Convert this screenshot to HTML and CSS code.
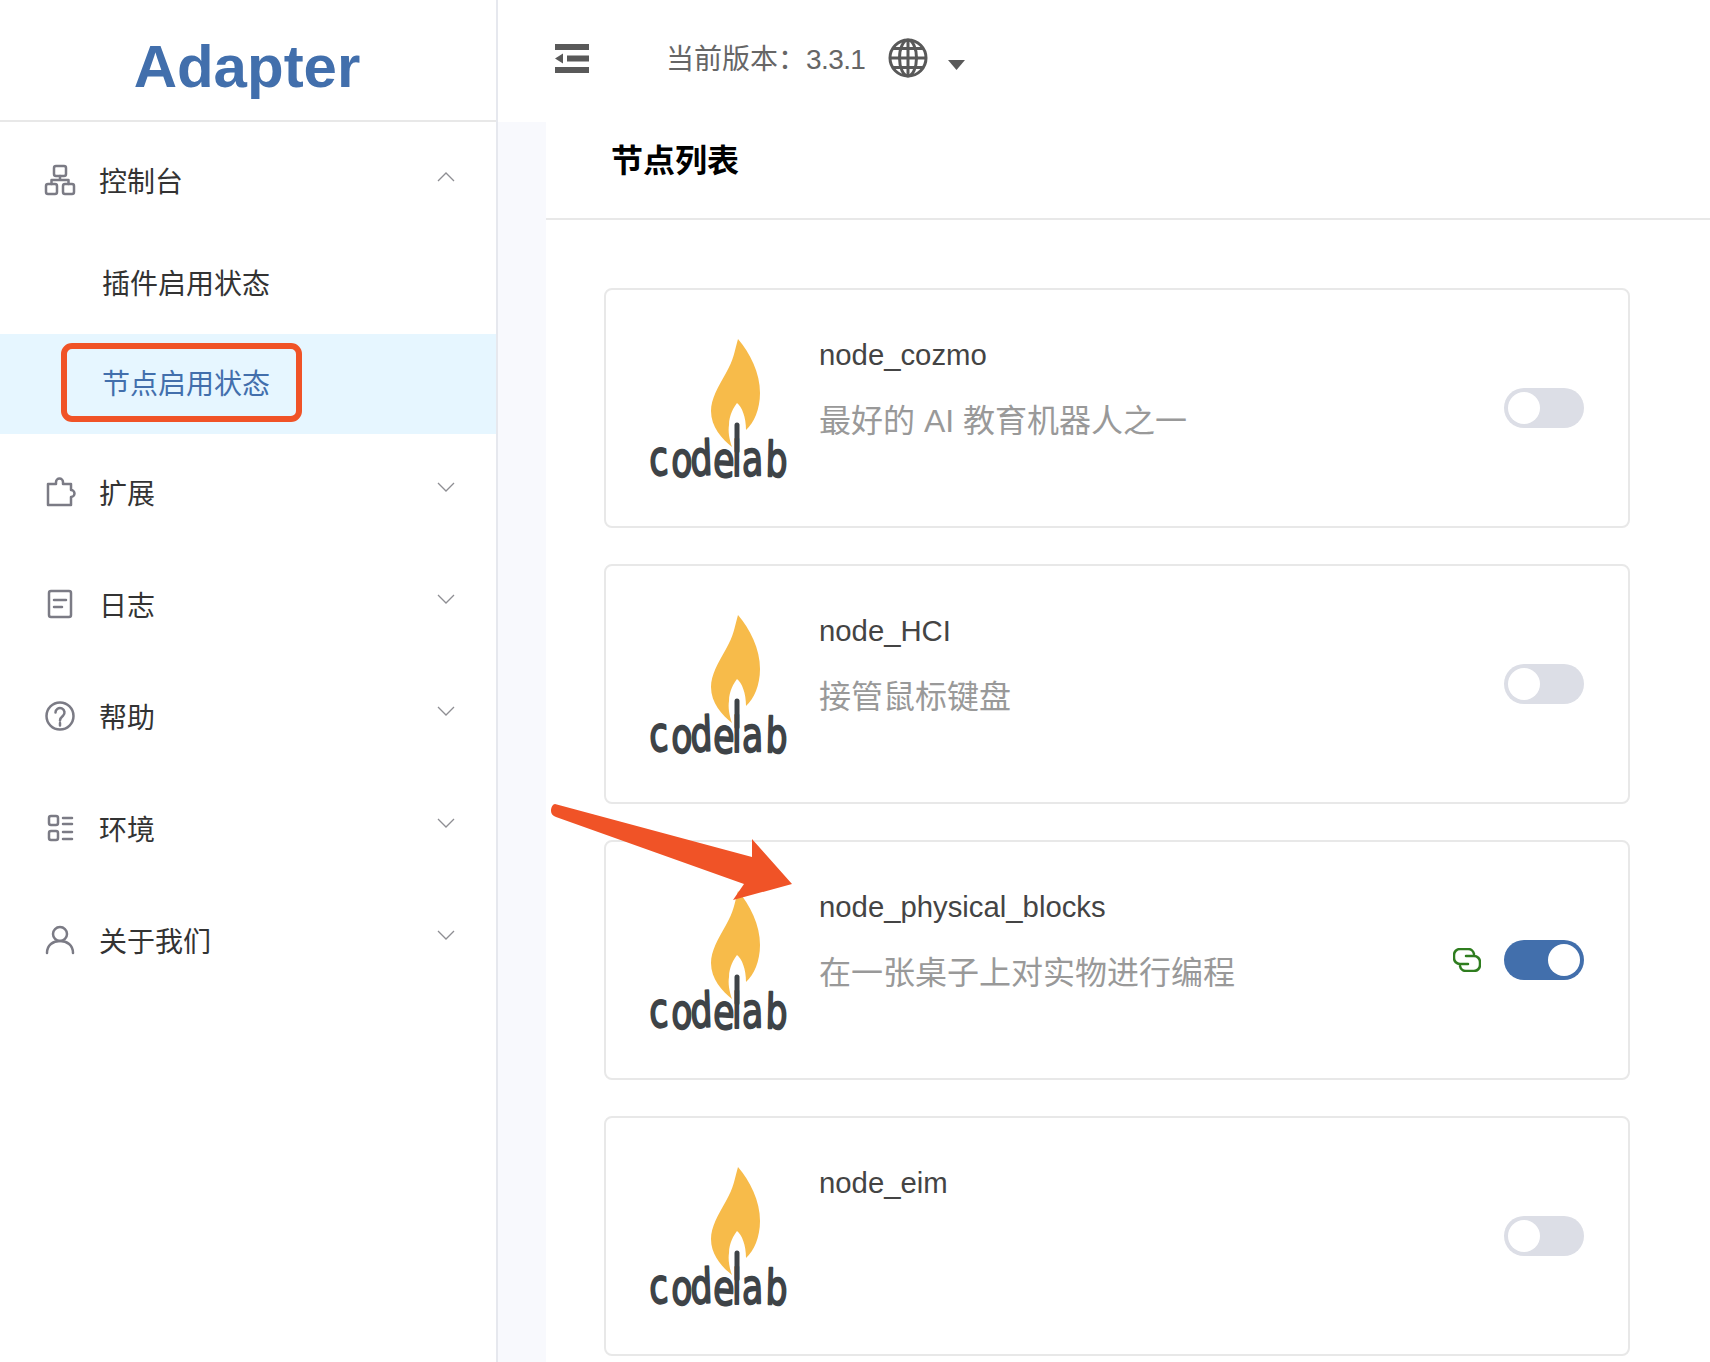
FILE: index.html
```html
<!DOCTYPE html>
<html lang="zh-CN">
<head>
<meta charset="utf-8">
<title>Adapter</title>
<link rel="stylesheet" href="styles.css">
</head>
<body>
<svg class="defs" width="0" height="0" aria-hidden="true">
  <symbol id="flame" viewBox="0 0 144 140">
    <path class="flame" d="M88 0C84 14 84 20 76 34C68 48 61 60 61 72C61 88 72 100 82 108C79 100 78 92 79 86C79 76 84 68 87 64C92 68 96 78 96 91C104 84 110 70 110 54C110 34 100 14 88 0Z"/>
    <path class="wick" d="M87 86V112"/>
  </symbol>
</svg>
<div class="app">
  <aside class="sidebar">
    <div class="brand">Adapter</div>
    <nav class="nav">
      <div class="nav-row nav-row-first">
        <svg class="nav-icon" viewBox="0 0 32 32"><rect x="10" y="2" width="12" height="10" rx="2"/><rect x="2" y="20" width="11" height="10" rx="2"/><rect x="19" y="20" width="11" height="10" rx="2"/><path d="M16 12v4M7.500 20v-4h17v4"/></svg>
        <span class="nav-label">控制台</span>
        <svg class="chev chev-up" viewBox="0 0 18 10"><path d="M1 9l8-8 8 8"/></svg>
      </div>
      <div class="sub-item">插件启用状态</div>
      <div class="sub-item sub-active">节点启用状态</div>
      <div class="nav-row">
        <svg class="nav-icon" viewBox="0 0 32 32"><path d="M4 29V8h8V6a3.500 3.500 0 0 1 7 0v2h8v6a3.500 3.500 0 0 1 0 7v8z"/></svg>
        <span class="nav-label">扩展</span>
        <svg class="chev" viewBox="0 0 18 10"><path d="M1 1l8 8 8-8"/></svg>
      </div>
      <div class="nav-row">
        <svg class="nav-icon" viewBox="0 0 32 32"><rect x="5" y="3" width="22" height="26" rx="2"/><path d="M10 12h12M10 19h8"/></svg>
        <span class="nav-label">日志</span>
        <svg class="chev" viewBox="0 0 18 10"><path d="M1 1l8 8 8-8"/></svg>
      </div>
      <div class="nav-row">
        <svg class="nav-icon" viewBox="0 0 32 32"><circle cx="16" cy="16" r="13.500"/><path d="M11.500 12.500a4.500 4.500 0 1 1 7.500 3.300c-1.800 1.500-3 2.200-3 4.700M16 23v2.500"/></svg>
        <span class="nav-label">帮助</span>
        <svg class="chev" viewBox="0 0 18 10"><path d="M1 1l8 8 8-8"/></svg>
      </div>
      <div class="nav-row">
        <svg class="nav-icon" viewBox="0 0 32 32"><rect x="5" y="4" width="9" height="9" rx="2"/><rect x="5" y="19" width="9" height="9" rx="2"/><path d="M19 6h9M19 12h9M19 20h9M19 27h9"/></svg>
        <span class="nav-label">环境</span>
        <svg class="chev" viewBox="0 0 18 10"><path d="M1 1l8 8 8-8"/></svg>
      </div>
      <div class="nav-row">
        <svg class="nav-icon" viewBox="0 0 32 32"><circle cx="16" cy="10" r="7"/><path d="M3 29c0-8 6-12 13-12s13 4 13 12"/></svg>
        <span class="nav-label">关于我们</span>
        <svg class="chev" viewBox="0 0 18 10"><path d="M1 1l8 8 8-8"/></svg>
      </div>
    </nav>
  </aside>
  <main class="main">
    <header class="topbar">
      <svg class="collapse" viewBox="0 0 34 29"><path d="M0 0h34v6H0zM12 11.500h22v6H12zM0 23h34v6H0zM0 14.500L8 9.500v10z"/></svg>
      <span class="version">当前版本：<span class="version-num">3.3.1</span></span>
      <svg class="globe" viewBox="0 0 40 40"><circle cx="20" cy="20" r="18"/><ellipse cx="20" cy="20" rx="8.500" ry="18"/><path d="M20 2v36M2 20h36M5 10.500h30M5 29.500h30"/></svg>
      <svg class="caret" viewBox="0 0 17 10"><path d="M0 0h17l-8.500 10z"/></svg>
    </header>
    <div class="page">
      <div class="gutter"></div>
      <section class="content">
        <h1 class="page-title">节点列表</h1>
        <div class="cards">
          <article class="card">
            <svg class="logo" viewBox="0 0 144 140"><use href="#flame"/><text class="logo-text" transform="translate(0 137) scale(.72 1)" x="0 29 57 87 114 128 160" y="0" rotate="-4 2 -3 3 0 -2 2">codelab</text></svg>
            <div class="info"><div class="name">node_cozmo</div><div class="desc">最好的 AI 教育机器人之一</div></div>
            <span class="switch"><span class="knob"></span></span>
          </article>
          <article class="card">
            <svg class="logo" viewBox="0 0 144 140"><use href="#flame"/><text class="logo-text" transform="translate(0 137) scale(.72 1)" x="0 29 57 87 114 128 160" y="0" rotate="-4 2 -3 3 0 -2 2">codelab</text></svg>
            <div class="info"><div class="name">node_HCI</div><div class="desc">接管鼠标键盘</div></div>
            <span class="switch"><span class="knob"></span></span>
          </article>
          <article class="card">
            <svg class="logo" viewBox="0 0 144 140"><use href="#flame"/><text class="logo-text" transform="translate(0 137) scale(.72 1)" x="0 29 57 87 114 128 160" y="0" rotate="-4 2 -3 3 0 -2 2">codelab</text></svg>
            <div class="info"><div class="name">node_physical_blocks</div><div class="desc">在一张桌子上对实物进行编程</div></div>
            <svg class="link" viewBox="0 0 28 24"><path d="M15 16h-8a6 6 0 0 1-6-6V7a6 6 0 0 1 6-6h8a6 6 0 0 1 6 5M13 8h8a6 6 0 0 1 6 6v3a6 6 0 0 1-6 6h-8a6 6 0 0 1-6-5"/></svg>
            <span class="switch switch-on"><span class="knob"></span></span>
          </article>
          <article class="card">
            <svg class="logo" viewBox="0 0 144 140"><use href="#flame"/><text class="logo-text" transform="translate(0 137) scale(.72 1)" x="0 29 57 87 114 128 160" y="0" rotate="-4 2 -3 3 0 -2 2">codelab</text></svg>
            <div class="info"><div class="name">node_eim</div></div>
            <span class="switch"><span class="knob"></span></span>
          </article>
        </div>
      </section>
    </div>
  </main>
</div>
<div class="mark-box"></div>
<svg class="mark-arrow" viewBox="0 0 260 110"><path d="M4 2C2 2 0 5 0 9C0 12 2 14 5 15L193 82L182 98L241 82L201 37L201 55Z"/></svg>
</body>
</html>
```
FILE: styles.css
```css
* { box-sizing: border-box; }
html, body { margin: 0; height: 1362px; overflow: hidden; background: #fff; }
body { position: relative; font-family: "Liberation Sans", "Noto Sans CJK SC", sans-serif; }
.defs { position: absolute; }
.app { display: grid; grid-template-columns: 498px 1fr; height: 1362px; }

.sidebar { border-right: 2px solid #e6e8ee; }
.brand { height: 122px; padding: 28px 2px 0 0; border-bottom: 2px solid #e8e8e8; text-align: center; font-size: 60px; font-weight: 700; line-height: 78px; color: #426fac; }
.nav { display: flex; flex-direction: column; }
.nav-row { height: 112px; display: flex; align-items: center; padding: 0 41px 0 44px; color: #333; font-size: 28px; }
.nav-row-first { margin-top: 2px; margin-bottom: -2px; }
.sub-item { height: 100px; padding: 2px 0 0 102px; line-height: 98px; font-size: 28px; color: #333; }
.sub-active { background: #e6f6ff; color: #426fac; margin-bottom: 2px; }
.nav-icon { width: 32px; height: 32px; flex: none; fill: none; stroke: #7b7b85; stroke-width: 2.500; stroke-linejoin: round; stroke-linecap: round; }
.nav-label { margin-left: 23px; flex: 1; }
.chev { width: 18px; height: 10px; flex: none; fill: none; stroke: #8e8e93; stroke-width: 1.300; margin-bottom: 10px; }
.chev-up { margin-bottom: 6px; }

.main { display: flex; flex-direction: column; min-width: 0; }
.topbar { height: 122px; flex: none; display: flex; align-items: center; padding-left: 57px; padding-bottom: 6px; color: #595959; }
.collapse { width: 34px; height: 29px; fill: #595959; }
.version { margin-left: 77px; margin-top: -3px; font-size: 28px; color: #666; }
.version-num { letter-spacing: -0.6px; }
.globe { width: 40px; height: 40px; margin-left: 23px; fill: none; stroke: #595959; stroke-width: 3; }
.caret { width: 17px; height: 10px; margin-left: 20px; margin-top: 14px; fill: #595959; }

.page { flex: 1; display: flex; min-height: 0; }
.gutter { width: 48px; flex: none; background: #f8f9fd; }
.content { flex: 1; min-width: 0; }
.page-title { margin: 0; height: 98px; padding-left: 65px; border-bottom: 2px solid #e8e8e8; font-size: 32px; font-weight: 700; line-height: 78px; color: #000; }
.cards { display: flex; flex-direction: column; gap: 36px; padding: 68px 80px 0 58px; }
.card { height: 240px; flex: none; display: flex; align-items: center; border: 2px solid #e8e8e8; border-radius: 8px; padding-right: 44px; }
.logo { width: 144px; height: 140px; flex: none; align-self: flex-start; margin: 49px 0 0 44px; overflow: visible; }
.flame { fill: #f7bb4a; }
.wick { fill: none; stroke: #3e4347; stroke-width: 5; stroke-linecap: round; }
.logo-text { font-family: "DejaVu Sans", sans-serif; font-size: 48px; fill: #3e4347; stroke: #3e4347; stroke-width: 2; stroke-linejoin: round; }
.info { flex: 1; align-self: flex-start; margin-left: 25px; padding-top: 45px; }
.name { height: 40px; line-height: 40px; font-size: 29.300px; color: #444; }
.desc { margin-top: 23px; line-height: 46px; font-size: 32px; color: #999; }
.switch { width: 80px; height: 40px; flex: none; display: flex; align-items: center; padding: 0 4px; border-radius: 20px; background: #dcdee6; }
.knob { width: 32px; height: 32px; border-radius: 50%; background: #fff; }
.switch-on { background: #426fac; justify-content: flex-end; }
.link { width: 28px; height: 24px; margin-right: 23px; fill: none; stroke: #2f7d1f; stroke-width: 2.500; stroke-linecap: round; }

.mark-box { position: absolute; left: 61px; top: 343px; width: 241px; height: 79px; border: 6px solid #f05327; border-radius: 11px; }
.mark-arrow { position: absolute; left: 551px; top: 802px; width: 260px; height: 110px; fill: #f05327; }
```
